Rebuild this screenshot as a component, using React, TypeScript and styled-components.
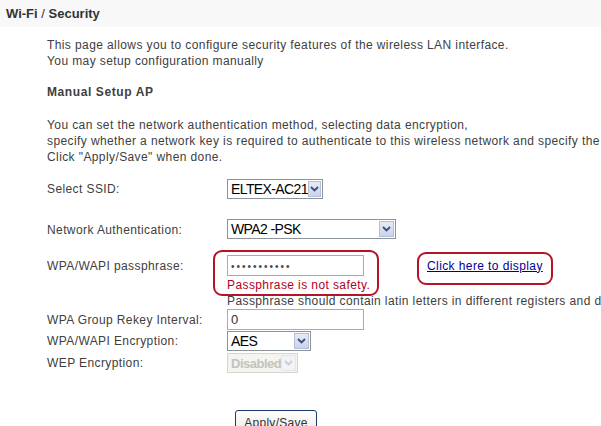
import styled, { createGlobalStyle } from "styled-components";

const GlobalStyle = createGlobalStyle`
  html, body {
    margin: 0;
    padding: 0;
    background: #ffffff;
    overflow: hidden;
  }
  body {
    width: 601px;
    height: 426px;
    font-family: "Liberation Sans", Arial, sans-serif;
  }
`;

function Chevron({ faded }: { faded?: boolean }): React.ReactElement {
  return (
    <svg width="9" height="6" viewBox="0 0 9 6">
      <path
        d="M1 1 L4.5 4.5 L8 1"
        fill="none"
        stroke={faded ? "#c8cdd8" : "#3d4d73"}
        strokeWidth="1.8"
      />
    </svg>
  );
}

interface SelectProps {
  value: string;
  width: number;
  disabled?: boolean;
}

function FakeSelect({ value, width, disabled }: SelectProps): React.ReactElement {
  return (
    <SelectBox $width={width} $disabled={disabled}>
      <SelectValue $disabled={disabled}>{value}</SelectValue>
      <ArrowButton $disabled={disabled}>
        <Chevron faded={disabled} />
      </ArrowButton>
    </SelectBox>
  );
}

export default function App(): React.ReactElement {
  return (
    <>
      <GlobalStyle />
      <Page>
        <TitleBar>
          Wi-Fi <Slash>/</Slash> Security
        </TitleBar>
        <Content>
          <Paragraph $top={10}>
            This page allows you to configure security features of the wireless LAN interface.
            <br />
            You may setup configuration manually
          </Paragraph>
          <Heading>Manual Setup AP</Heading>
          <Paragraph $top={17}>
            You can set the network authentication method, selecting data encryption,
            <br />
            specify whether a network key is required to authenticate to this wireless network and specify the encryption strength.
            <br />
            Click "Apply/Save" when done.
          </Paragraph>

          <FormRow $top={14}>
            <Label>Select SSID:</Label>
            <FakeSelect value="ELTEX-AC21" width={96} />
          </FormRow>
          <FormRow $top={20}>
            <Label $pad={2}>Network Authentication:</Label>
            <FakeSelect value="WPA2 -PSK" width={169} />
          </FormRow>
          <FormRow $top={16} $align="start">
            <Label $pad={3}>WPA/WAPI passphrase:</Label>
            <Stack>
              <PassRow>
                <TextInput $width={137}>
                  <Dots>&#8226;&#8226;&#8226;&#8226;&#8226;&#8226;&#8226;&#8226;&#8226;&#8226;&#8226;</Dots>
                </TextInput>
                <DisplayLink href="#">Click here to display</DisplayLink>
              </PassRow>
              <ErrorText>Passphrase is not safety.</ErrorText>
              <Hint>Passphrase should contain latin letters in different registers and digits.</Hint>
            </Stack>
          </FormRow>
          <FormRow $top={1}>
            <Label>WPA Group Rekey Interval:</Label>
            <TextInput $width={137}>0</TextInput>
          </FormRow>
          <FormRow $top={1}>
            <Label>WPA/WAPI Encryption:</Label>
            <FakeSelect value="AES" width={84} />
          </FormRow>
          <FormRow $top={2}>
            <Label>WEP Encryption:</Label>
            <FakeSelect value="Disabled" width={71} disabled />
          </FormRow>
          <ButtonRow>
            <ApplyButton>Apply/Save</ApplyButton>
          </ButtonRow>
        </Content>
        <Annotation $left={213} $top={250} $width={166} $height={46} />
        <Annotation $left={417} $top={252} $width={136} $height={33} />
      </Page>
    </>
  );
}

const Page = styled.div`
  position: relative;
  width: 601px;
  height: 426px;
  overflow: hidden;
  color: #404040;
  font-size: 12px;
  letter-spacing: 0.4px;
`;

const TitleBar = styled.div`
  height: 27px;
  box-sizing: border-box;
  padding: 6px 0 0 6px;
  background: #f8f8f8;
  font-size: 13px;
  font-weight: bold;
  color: #333333;
  letter-spacing: 0;
  white-space: nowrap;
`;

const Slash = styled.span`
  font-weight: normal;
`;

const Content = styled.div`
  padding-left: 47px;
  white-space: nowrap;
`;

const Paragraph = styled.div<{ $top: number }>`
  margin-top: ${(p) => p.$top}px;
  line-height: 16px;
`;

const Heading = styled.div`
  margin-top: 15px;
  line-height: 16px;
  font-weight: bold;
  font-size: 12px;
  letter-spacing: 0.6px;
`;

const FormRow = styled.div<{ $top: number; $align?: string }>`
  display: grid;
  grid-template-columns: 180px 1fr;
  align-items: ${(p) => p.$align ?? "center"};
  margin-top: ${(p) => p.$top}px;
`;

const Label = styled.div<{ $pad?: number }>`
  padding-top: ${(p) => p.$pad ?? 0}px;
  line-height: 16px;
`;

const SelectBox = styled.div<{ $width: number; $disabled?: boolean }>`
  box-sizing: border-box;
  width: ${(p) => p.$width}px;
  height: 20px;
  display: flex;
  align-items: center;
  justify-content: space-between;
  border: 1px solid ${(p) => (p.$disabled ? "#d6d6d0" : "#8a929a")};
  background: ${(p) => (p.$disabled ? "#f4f4f0" : "#ffffff")};
  padding: 1px;
`;

const SelectValue = styled.span<{ $disabled?: boolean }>`
  font-family: "Liberation Sans", Arial, sans-serif;
  font-size: ${(p) => (p.$disabled ? 13 : 14)}px;
  letter-spacing: ${(p) => (p.$disabled ? -0.5 : -0.6)}px;
  padding-left: 2px;
  color: ${(p) => (p.$disabled ? "#c4c3bb" : "#000000")};
  font-weight: ${(p) => (p.$disabled ? "bold" : "normal")};
`;

const ArrowButton = styled.span<{ $disabled?: boolean }>`
  box-sizing: border-box;
  width: 15px;
  height: 16px;
  display: flex;
  align-items: center;
  justify-content: center;
  border: 1px solid ${(p) => (p.$disabled ? "#e4e6ee" : "#b4bfd6")};
  background: ${(p) =>
    p.$disabled
      ? "#f2f3f6"
      : "linear-gradient(180deg, #e6ebf8 0%, #c9d3ea 100%)"};
`;

const Stack = styled.div`
  display: flex;
  flex-direction: column;
`;

const PassRow = styled.div`
  display: flex;
  align-items: center;
  gap: 63px;
`;

const TextInput = styled.div<{ $width: number }>`
  box-sizing: border-box;
  width: ${(p) => p.$width}px;
  height: 21px;
  border: 1px solid #a5acb2;
  padding: 2px 0 0 3px;
  font-size: 13px;
  color: #333333;
  line-height: 15px;
  letter-spacing: 0;
`;

const Dots = styled.span`
  font-size: 10px;
  letter-spacing: 2px;
  color: #444444;
`;

const DisplayLink = styled.a`
  color: #000099;
  text-decoration: underline;
  font-size: 12px;
`;

const ErrorText = styled.div`
  line-height: 18px;
  color: #b4001e;
  font-size: 12px;
`;

const Hint = styled.div`
  line-height: 14px;
`;

const ButtonRow = styled.div`
  margin: 37px 0 0 188px;
`;

const ApplyButton = styled.button`
  box-sizing: border-box;
  width: 82px;
  height: 22px;
  border: 1px solid #1c3a6e;
  border-radius: 3px;
  background: linear-gradient(180deg, #ffffff 0%, #ecebe6 100%);
  font-family: "Liberation Sans", Arial, sans-serif;
  font-size: 12px;
  letter-spacing: 0.3px;
  color: #333333;
  padding: 4px 0 0;
`;

const Annotation = styled.div<{
  $left: number;
  $top: number;
  $width: number;
  $height: number;
}>`
  position: absolute;
  left: ${(p) => p.$left}px;
  top: ${(p) => p.$top}px;
  width: ${(p) => p.$width}px;
  height: ${(p) => p.$height}px;
  box-sizing: border-box;
  border: 2px solid #b3142a;
  border-radius: 9px;
  pointer-events: none;
`;
